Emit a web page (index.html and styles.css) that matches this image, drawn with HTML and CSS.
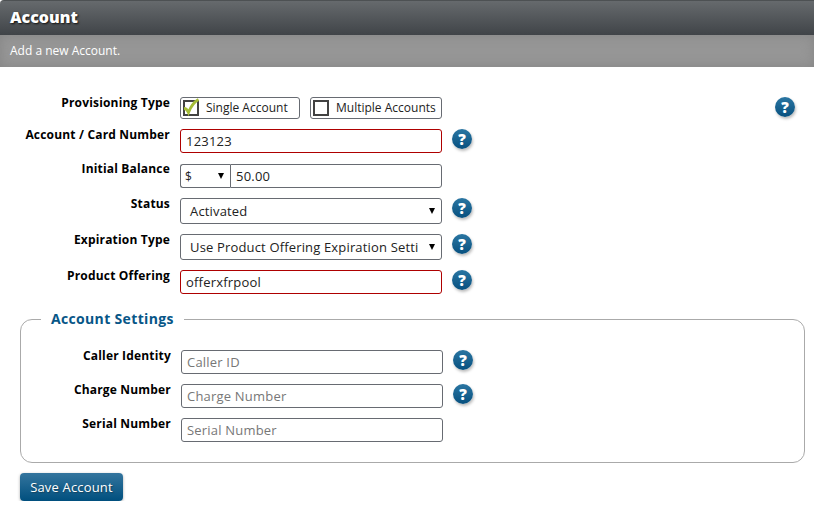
FILE: index.html
```html
<!DOCTYPE html>
<html lang="en">
<head>
<meta charset="utf-8">
<title>Account</title>
<link rel="stylesheet" href="styles.css">
</head>
<body>
<header class="title"><h1>Account</h1></header>
<div class="subtitle">Add a new Account.</div>
<form class="form">
  <div class="row short">
    <span class="label">Provisioning Type</span>
    <div class="choices">
      <label class="choice single"><svg class="box" viewBox="0 0 20 18"><rect x="3" y="3" width="14" height="14"/><path class="tick" d="M3 10.500C5 10.500 6.500 12 7.500 14.500C10 8 13 4 17.500 1.500"/></svg><span>Single Account</span></label>
      <label class="choice multiple"><svg class="box" viewBox="0 0 20 18"><rect x="3" y="3" width="14" height="14"/></svg><span>Multiple Accounts</span></label>
    </div>
    <span class="help far">?</span>
  </div>
  <div class="row card">
    <span class="label">Account / Card Number</span>
    <input class="field required" value="123123">
    <span class="help">?</span>
  </div>
  <div class="row balance">
    <span class="label">Initial Balance</span>
    <div class="money">
      <div class="select currency"><span>$</span><svg class="arrow" viewBox="0 0 6 6"><path d="M0 0H6L3 6Z"/></svg></div>
      <input class="field amount" value="50.00">
    </div>
  </div>
  <div class="row tall">
    <span class="label">Status</span>
    <div class="select"><span>Activated</span><svg class="arrow" viewBox="0 0 6 6"><path d="M0 0H6L3 6Z"/></svg></div>
    <span class="help">?</span>
  </div>
  <div class="row tall">
    <span class="label">Expiration Type</span>
    <div class="select"><span>Use Product Offering Expiration Setti</span><svg class="arrow" viewBox="0 0 6 6"><path d="M0 0H6L3 6Z"/></svg></div>
    <span class="help">?</span>
  </div>
  <div class="row">
    <span class="label">Product Offering</span>
    <input class="field required" value="offerxfrpool">
    <span class="help">?</span>
  </div>
  <fieldset class="settings">
    <legend>Account Settings</legend>
    <div class="row">
      <span class="label">Caller Identity</span>
      <input class="field" placeholder="Caller ID">
      <span class="help">?</span>
    </div>
    <div class="row">
      <span class="label">Charge Number</span>
      <input class="field" placeholder="Charge Number">
      <span class="help">?</span>
    </div>
    <div class="row">
      <span class="label">Serial Number</span>
      <input class="field" placeholder="Serial Number">
    </div>
  </fieldset>
  <button class="save" type="button">Save Account</button>
</form>
</body>
</html>
```
FILE: styles.css
```css
* { box-sizing: border-box; }
body { margin: 0; background: #fff; color: #000; font: 12px "Open Sans", sans-serif; overflow: hidden; }
.title { height: 35px; padding-left: 10px; border-top: 1px solid #4d5153; border-top-left-radius: 4px; background: linear-gradient(#666a6d, #404448); }
.title h1 { margin: 0; font-size: 16px; font-weight: 800; line-height: 32px; color: #fff; text-shadow: 1px 1px 2px #111; }
.subtitle { height: 32px; padding-left: 10px; line-height: 31px; color: #fff; background: #969696; box-shadow: inset 0 0 12px #858585; }
.form { padding: 30px 9px 0 20px; }
.row { display: flex; align-items: flex-start; height: 24px; margin-bottom: 10px; }
.short { height: 22px; }
.balance { margin-top: 11px; }
.tall { height: 26px; }
.label { width: 150px; margin-right: 10px; line-height: 16px; margin-top: -2px; text-align: right; font-weight: 700; letter-spacing: .18px; white-space: nowrap; }
.balance .label { margin-top: -3px; }
.choices { display: flex; gap: 10px; }
.choice { display: flex; height: 22px; align-items: center; border: 1px solid #676b72; border-radius: 3px; line-height: 18px; color: #222; }
.single { width: 120px; }
.multiple { width: 132px; }
.choice span { margin-left: 5px; white-space: nowrap; }
.box { width: 20px; height: 18px; margin-top: -2px; flex: none; overflow: visible; fill: none; stroke: #424242; stroke-width: 2; }
.tick { stroke: #a5bd38; stroke-width: 2.8; }
.field, .select { width: 262px; height: 100%; border: 1px solid #676b72; border-radius: 3px; background: #fff; font: 13px "Open Sans", sans-serif; color: #222; letter-spacing: .2px; }
.field { padding: 0 5px; outline: 0; }
.field::placeholder { color: #777; }
.required { border-color: #ae0000; }
.select { display: flex; align-items: center; justify-content: space-between; padding: 0 6px 0 9px; white-space: nowrap; letter-spacing: .16px; }
.arrow { width: 6px; height: 6px; margin-top: -1px; fill: #000; }
.money { display: flex; height: 100%; }
.currency { width: 50px; padding: 0 6px 0 4px; border-right: 0; border-radius: 3px 0 0 3px; font-size: 12px; }
.amount { width: 212px; border-radius: 0 3px 3px 0; }
.help { display: block; width: 20px; height: 20px; margin-left: 10px; border-radius: 50%; background: linear-gradient(#2b76a2, #07507f); box-shadow: 1px 2px 3px #bbb; color: #fff; font-size: 15px; font-weight: 800; line-height: 20px; text-align: center; }
.far { margin-left: auto; margin-right: 10px; }
.settings { height: 153px; margin: 16px 0 10px; padding: 22px 0 0; border: 1px solid #aaa; border-radius: 12px; }
.settings legend { margin-left: 20px; padding: 0 10px; height: 18px; font-size: 14px; font-weight: 700; line-height: 18px; letter-spacing: .34px; color: #075687; }
.save { display: block; width: 103px; height: 28px; padding: 0; border: 0; border-radius: 4px; background: linear-gradient(#34759e, #004f7e); box-shadow: 0 1px 3px #aaa; color: #fff; font: 13px/28px "Open Sans", sans-serif; letter-spacing: .17px; text-shadow: 1px 1px 1px #16435f; }
```
